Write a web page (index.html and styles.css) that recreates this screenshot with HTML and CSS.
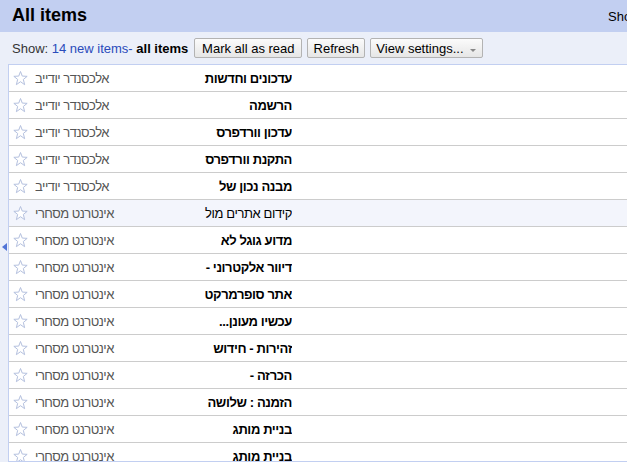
FILE: index.html
```html
<!DOCTYPE html>
<html lang="en">
<head>
<meta charset="utf-8">
<title>All items</title>
<link rel="stylesheet" href="styles.css">
</head>
<body>
<div class="viewer">
  <div class="header">
    <h1 class="page-title">All items</h1>
    <div class="view-mode">Show: Expanded - List</div>
  </div>
  <div class="toolbar">
    <span class="show">Show: <a class="link">14 new items-</a> <b>all items</b></span>
    <button class="btn btn-mark">Mark all as read</button>
    <button class="btn btn-refresh">Refresh</button>
    <button class="btn btn-menu">View settings...<span class="arrow"></span></button>
  </div>
  <div class="main">
    <div class="gutter"><span class="toggle"></span></div>
    <div class="list">
      <div class="row"><svg class="star" viewBox="0 0 15 15"><polygon points="7.5,0.5 9.26,5.07 14.16,5.34 10.35,8.43 11.61,13.66 7.5,10.7 3.39,13.66 4.65,8.43 0.84,5.34 5.74,5.07"/></svg><span class="source">אלכסנדר יודייב</span><span class="title" dir="rtl">עדכונים וחדשות</span></div>
      <div class="row"><svg class="star" viewBox="0 0 15 15"><polygon points="7.5,0.5 9.26,5.07 14.16,5.34 10.35,8.43 11.61,13.66 7.5,10.7 3.39,13.66 4.65,8.43 0.84,5.34 5.74,5.07"/></svg><span class="source">אלכסנדר יודייב</span><span class="title" dir="rtl">הרשמה</span></div>
      <div class="row"><svg class="star" viewBox="0 0 15 15"><polygon points="7.5,0.5 9.26,5.07 14.16,5.34 10.35,8.43 11.61,13.66 7.5,10.7 3.39,13.66 4.65,8.43 0.84,5.34 5.74,5.07"/></svg><span class="source">אלכסנדר יודייב</span><span class="title" dir="rtl">עדכון וורדפרס</span></div>
      <div class="row"><svg class="star" viewBox="0 0 15 15"><polygon points="7.5,0.5 9.26,5.07 14.16,5.34 10.35,8.43 11.61,13.66 7.5,10.7 3.39,13.66 4.65,8.43 0.84,5.34 5.74,5.07"/></svg><span class="source">אלכסנדר יודייב</span><span class="title" dir="rtl">התקנת וורדפרס</span></div>
      <div class="row"><svg class="star" viewBox="0 0 15 15"><polygon points="7.5,0.5 9.26,5.07 14.16,5.34 10.35,8.43 11.61,13.66 7.5,10.7 3.39,13.66 4.65,8.43 0.84,5.34 5.74,5.07"/></svg><span class="source">אלכסנדר יודייב</span><span class="title" dir="rtl">מבנה נכון של</span></div>
      <div class="row read"><svg class="star" viewBox="0 0 15 15"><polygon points="7.5,0.5 9.26,5.07 14.16,5.34 10.35,8.43 11.61,13.66 7.5,10.7 3.39,13.66 4.65,8.43 0.84,5.34 5.74,5.07"/></svg><span class="source">אינטרנט מסחרי</span><span class="title" dir="rtl">קידום אתרים מול</span></div>
      <div class="row"><svg class="star" viewBox="0 0 15 15"><polygon points="7.5,0.5 9.26,5.07 14.16,5.34 10.35,8.43 11.61,13.66 7.5,10.7 3.39,13.66 4.65,8.43 0.84,5.34 5.74,5.07"/></svg><span class="source">אינטרנט מסחרי</span><span class="title" dir="rtl">מדוע גוגל לא</span></div>
      <div class="row"><svg class="star" viewBox="0 0 15 15"><polygon points="7.5,0.5 9.26,5.07 14.16,5.34 10.35,8.43 11.61,13.66 7.5,10.7 3.39,13.66 4.65,8.43 0.84,5.34 5.74,5.07"/></svg><span class="source">אינטרנט מסחרי</span><span class="title" dir="rtl">דיוור אלקטרוני -</span></div>
      <div class="row"><svg class="star" viewBox="0 0 15 15"><polygon points="7.5,0.5 9.26,5.07 14.16,5.34 10.35,8.43 11.61,13.66 7.5,10.7 3.39,13.66 4.65,8.43 0.84,5.34 5.74,5.07"/></svg><span class="source">אינטרנט מסחרי</span><span class="title" dir="rtl">אתר סופרמרקט</span></div>
      <div class="row"><svg class="star" viewBox="0 0 15 15"><polygon points="7.5,0.5 9.26,5.07 14.16,5.34 10.35,8.43 11.61,13.66 7.5,10.7 3.39,13.66 4.65,8.43 0.84,5.34 5.74,5.07"/></svg><span class="source">אינטרנט מסחרי</span><span class="title" dir="rtl">עכשיו מעונן...</span></div>
      <div class="row"><svg class="star" viewBox="0 0 15 15"><polygon points="7.5,0.5 9.26,5.07 14.16,5.34 10.35,8.43 11.61,13.66 7.5,10.7 3.39,13.66 4.65,8.43 0.84,5.34 5.74,5.07"/></svg><span class="source">אינטרנט מסחרי</span><span class="title" dir="rtl">זהירות - חידוש</span></div>
      <div class="row"><svg class="star" viewBox="0 0 15 15"><polygon points="7.5,0.5 9.26,5.07 14.16,5.34 10.35,8.43 11.61,13.66 7.5,10.7 3.39,13.66 4.65,8.43 0.84,5.34 5.74,5.07"/></svg><span class="source">אינטרנט מסחרי</span><span class="title" dir="rtl">הכרזה -</span></div>
      <div class="row"><svg class="star" viewBox="0 0 15 15"><polygon points="7.5,0.5 9.26,5.07 14.16,5.34 10.35,8.43 11.61,13.66 7.5,10.7 3.39,13.66 4.65,8.43 0.84,5.34 5.74,5.07"/></svg><span class="source">אינטרנט מסחרי</span><span class="title" dir="rtl">הזמנה : שלושה</span></div>
      <div class="row"><svg class="star" viewBox="0 0 15 15"><polygon points="7.5,0.5 9.26,5.07 14.16,5.34 10.35,8.43 11.61,13.66 7.5,10.7 3.39,13.66 4.65,8.43 0.84,5.34 5.74,5.07"/></svg><span class="source">אינטרנט מסחרי</span><span class="title" dir="rtl">בניית מותג</span></div>
      <div class="row"><svg class="star" viewBox="0 0 15 15"><polygon points="7.5,0.5 9.26,5.07 14.16,5.34 10.35,8.43 11.61,13.66 7.5,10.7 3.39,13.66 4.65,8.43 0.84,5.34 5.74,5.07"/></svg><span class="source">אינטרנט מסחרי</span><span class="title" dir="rtl">בניית מותג</span></div>
    </div>
  </div>
</div>
</body>
</html>
```
FILE: styles.css
```css
html, body {
  margin: 0;
  padding: 0;
  overflow: hidden;
  background: #fff;
}
body {
  font-family: "Liberation Sans", Arial, "DejaVu Sans", sans-serif;
  font-size: 13px;
  color: #000;
  width: 627px;
  height: 462px;
}
.viewer {
  width: 627px;
}
.header {
  height: 32px;
  box-sizing: border-box;
  background: #c2cff1;
  padding-left: 12px;
  display: grid;
  grid-template-columns: 596px max-content;
  align-items: baseline;
  line-height: 30px;
  white-space: nowrap;
}
.page-title {
  margin: 0;
  font-size: 18px;
  font-weight: bold;
}
.view-mode {
  font-size: 13px;
}
.toolbar {
  height: 32px;
  background: #ebeff9;
  display: flex;
  align-items: center;
  padding-left: 12px;
  white-space: nowrap;
}
.show {
  color: #333;
}
.show b {
  color: #000;
}
.link {
  color: #2a4bbb;
}
.btn {
  height: 20px;
  box-sizing: border-box;
  border: 1px solid #b3b3b3;
  border-radius: 2px;
  background: linear-gradient(#fbfbfb, #e6e6e6);
  font-family: inherit;
  font-size: 13px;
  color: #000;
  padding: 0;
  margin: 0 0 0 5px;
  display: flex;
  align-items: center;
  justify-content: center;
}
.btn-mark {
  margin-left: 6px;
  width: 108px;
}
.btn-refresh {
  width: 58px;
}
.btn-menu {
  width: 113px;
  justify-content: flex-start;
  padding-left: 5px;
}
.arrow {
  width: 0;
  height: 0;
  border-left: 3px solid transparent;
  border-right: 3px solid transparent;
  border-top: 3px solid #888;
  margin-left: auto;
  margin-right: 6px;
  margin-top: 5px;
}
.main {
  display: flex;
}
.gutter {
  width: 8px;
  flex: none;
  background: #ebeff9;
  height: 398px;
  display: flex;
  flex-direction: column;
}
.toggle {
  width: 0;
  height: 0;
  border-right: 5px solid #5174d6;
  border-top: 4.5px solid transparent;
  border-bottom: 4.5px solid transparent;
  margin-top: 179px;
  margin-left: 2px;
}
.list {
  flex: 1;
  height: 398px;
  box-sizing: border-box;
  border-top: 1px solid #c2cff1;
  border-left: 1px solid #c2cff1;
  border-bottom: 1px solid #c2cff1;
  overflow: hidden;
}
.row {
  height: 27px;
  box-sizing: border-box;
  border-bottom: 1px solid #cccccc;
  display: flex;
  align-items: center;
  white-space: nowrap;
}
.row.read {
  background: #f3f5fc;
}
.star {
  width: 15px;
  height: 15px;
  flex: none;
  margin-left: 4px;
}
.star polygon {
  fill: #fff;
  stroke: #b4c0de;
  stroke-width: 1;
  stroke-linejoin: round;
}
.source {
  width: 120px;
  flex: none;
  margin-left: 7px;
  color: #555;
  letter-spacing: -0.5px;
  overflow: hidden;
}
.title {
  width: 137px;
  flex: none;
  text-align: right;
  font-weight: bold;
  letter-spacing: -0.4px;
  overflow: hidden;
}
.read .title {
  font-weight: normal;
}
```
